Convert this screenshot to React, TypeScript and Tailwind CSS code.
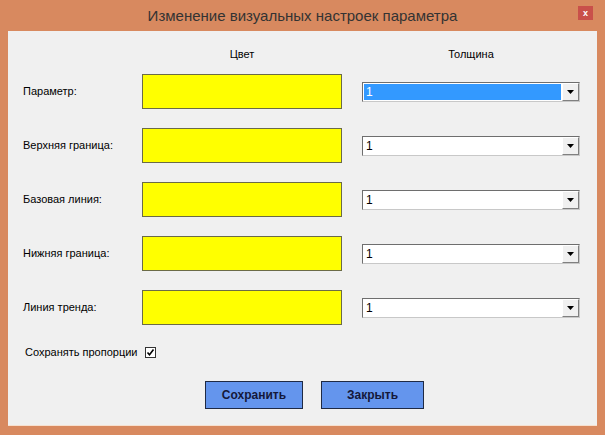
import React from "react";

const rows = ["Параметр:", "Верхняя граница:", "Базовая линия:", "Нижняя граница:", "Линия тренда:"];

function Dropdown({ selected }: { selected: boolean }) {
  return (
    <div className="w-[218px] h-[20px] flex bg-white border border-t-[#6e6e6e] border-l-[#6e6e6e] border-r-[#c8c8c8] border-b-[#c8c8c8]">
      <div className="flex-1 p-[1px] flex">
        <div
          className={
            "flex-1 flex items-center pl-[2px] text-[12px] leading-none " +
            (selected ? "bg-[#3399ff] text-white" : "text-black")
          }
        >
          1
        </div>
      </div>
      <div className="w-[17px] h-full bg-[#f0f0f0] border border-t-white border-l-white border-r-[#808080] border-b-[#808080] flex items-center justify-center">
        <svg width="7" height="4" viewBox="0 0 7 4">
          <polygon points="0,0 7,0 3.5,4" fill="#000" />
        </svg>
      </div>
    </div>
  );
}

export default function App() {
  return (
    <div
      className="w-[605px] h-[435px] bg-[#d8895f] flex flex-col"
      style={{ fontFamily: '"Liberation Sans", Arial, sans-serif' }}
    >
      <div className="h-[31px] relative flex items-center justify-center">
        <span className="text-[15px] text-[#333333] pt-[1px]">Изменение визуальных настроек параметра</span>
        <div className="absolute right-[12px] top-[6px] w-[15px] h-[14px] bg-[#c9504a] flex items-center justify-center text-white text-[9px] font-bold leading-none">
          x
        </div>
      </div>
      <div className="mx-[8px] h-[395px] bg-[#f0f0f0] border-b border-[#f7e0cf] flex flex-col text-[11px] text-black">
        <div className="mt-[13px] h-[20px] flex items-center pl-[15px]">
          <div className="w-[119px]" />
          <div className="w-[200px] text-center">Цвет</div>
          <div className="w-[20px]" />
          <div className="w-[218px] text-center">Толщина</div>
        </div>
        <div className="mt-[10px] flex flex-col gap-[19px] pl-[15px]">
          {rows.map((r, i) => (
            <div key={r} className="h-[35px] flex items-center">
              <div className="w-[119px]">{r}</div>
              <div className="w-[200px] h-[35px] bg-[#ffff00] border border-[#6b6b47]" />
              <div className="w-[20px]" />
              <Dropdown selected={i === 0} />
            </div>
          ))}
        </div>
        <div className="mt-[20px] h-[14px] flex items-center pl-[17px]">
          <span>Сохранять пропорции</span>
          <div className="ml-[7px] w-[11px] h-[11px] border border-[#333333] bg-white flex items-center justify-center">
            <svg width="9" height="9" viewBox="0 0 9 9">
              <polyline points="1.5,4.5 3.5,6.8 7.5,1.5" fill="none" stroke="#000" strokeWidth="1.6" />
            </svg>
          </div>
        </div>
        <div className="mt-[22px] flex pl-[197px] gap-[18px]">
          <div className="w-[98px] h-[28px] bg-[#6495ed] border border-[#1f2a44] flex items-center justify-center font-bold text-[12px] text-[#14183a]">
            Сохранить
          </div>
          <div className="w-[103px] h-[28px] bg-[#6495ed] border border-[#1f2a44] flex items-center justify-center font-bold text-[12px] text-[#14183a]">
            Закрыть
          </div>
        </div>
      </div>
    </div>
  );
}
